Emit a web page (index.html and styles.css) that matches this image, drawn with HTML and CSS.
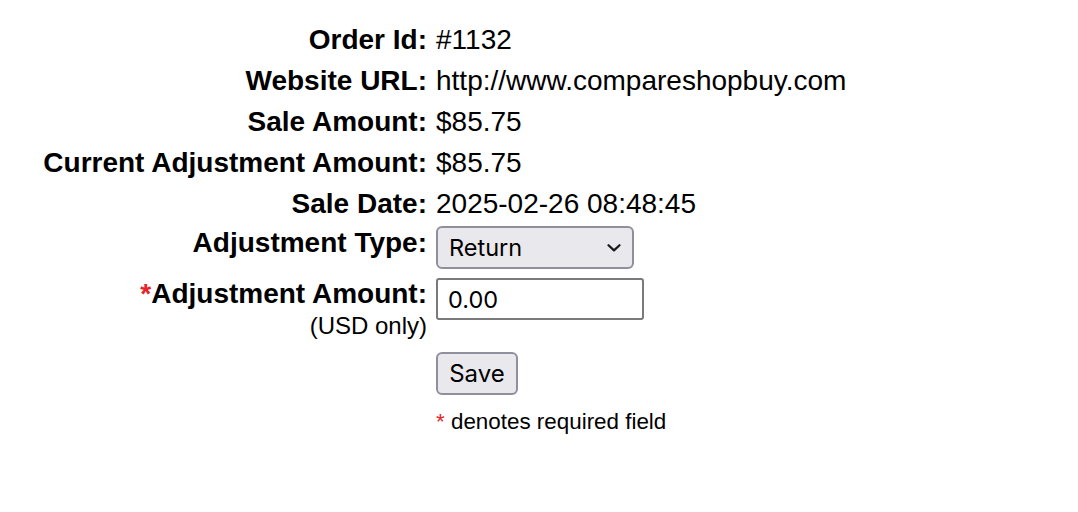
FILE: index.html
```html
<!DOCTYPE html>
<html>
<head>
<meta charset="utf-8">
<link rel="stylesheet" href="styles.css">
</head>
<body>
<form class="form">
  <div class="label">Order Id:</div>
  <div class="value">#1132</div>

  <div class="label">Website URL:</div>
  <div class="value">http://www.compareshopbuy.com</div>

  <div class="label">Sale Amount:</div>
  <div class="value">$85.75</div>

  <div class="label">Current Adjustment Amount:</div>
  <div class="value">$85.75</div>

  <div class="label">Sale Date:</div>
  <div class="value">2025-02-26 08:48:45</div>

  <div class="label label-select">Adjustment Type:</div>
  <div class="value-control">
    <span class="select-wrap">
      <select class="select">
        <option>Return</option>
        <option>Partial Return</option>
      </select>
      <svg class="chevron" width="14" height="8" viewBox="0 0 14 8"><path d="M1.5 1.2 L7 6.4 L12.5 1.2" fill="none" stroke="#1a1a1a" stroke-width="2.2" stroke-linecap="round" stroke-linejoin="round"/></svg>
    </span>
  </div>

  <div class="label label-amount">
    <div class="amount-line"><span class="req">*</span>Adjustment Amount:</div>
    <div class="hint">(USD only)</div>
  </div>
  <div class="value-control amount-cell">
    <input class="input" type="text" value="0.00">
  </div>

  <div class="value-control save-cell">
    <button type="button" class="button">Save</button>
  </div>

  <div class="note"><span class="req-note">*</span> denotes required field</div>
</form>
</body>
</html>
```

FILE: styles.css
```css
html, body {
  margin: 0;
  padding: 0;
  background: #ffffff;
}

body {
  font-family: "Liberation Sans", Arial, sans-serif;
  color: #000000;
}

.form {
  display: grid;
  grid-template-columns: 385px auto;
  column-gap: 9px;
  justify-content: start;
  align-items: start;
  padding: 19px 0 0 42px;
  font-size: 28px;
}

.label {
  grid-column: 1;
  text-align: right;
  font-weight: bold;
  line-height: 41px;
  white-space: nowrap;
}

.value {
  grid-column: 2;
  line-height: 41px;
  white-space: nowrap;
}

.label-select {
  line-height: 37px;
}

.value-control {
  grid-column: 2;
}

.select-wrap {
  position: relative;
  display: inline-block;
  margin-top: 2px;
}

.select {
  appearance: none;
  -webkit-appearance: none;
  display: block;
  box-sizing: border-box;
  width: 198px;
  height: 43px;
  margin: 0;
  padding: 0 0 0 11px;
  border: 2px solid #8f8f9d;
  border-radius: 6px;
  background: #e9e9ed;
  font-family: Inter, "Liberation Sans", sans-serif;
  font-size: 23.5px;
  color: #000000;
}

.chevron {
  position: absolute;
  right: 13px;
  top: 18px;
  pointer-events: none;
}

.label-amount {
  padding-top: 9px;
  line-height: normal;
}

.amount-line {
  line-height: 31px;
}

.req {
  color: #e5242b;
}

.hint {
  font-weight: normal;
  font-size: 24px;
  line-height: 27px;
  padding-top: 3px;
}

.amount-cell {
  padding-top: 9px;
}

.input {
  display: block;
  box-sizing: border-box;
  width: 208px;
  height: 42px;
  margin: 0;
  padding: 0 0 0 10px;
  border: 2px solid #7a7a7a;
  border-radius: 3px;
  background: #ffffff;
  font-family: Inter, "Liberation Sans", sans-serif;
  font-size: 23.5px;
  color: #000000;
}

.save-cell {
  padding-top: 13px;
}

.button {
  display: block;
  box-sizing: border-box;
  width: 82px;
  height: 43px;
  margin: 0;
  padding: 0;
  border: 2px solid #8f8f9d;
  border-radius: 6px;
  background: #e9e9ed;
  font-family: Inter, "Liberation Sans", sans-serif;
  font-size: 24px;
  color: #000000;
}

.note {
  grid-column: 2;
  margin-top: 14px;
  font-size: 22.4px;
  line-height: 25px;
  white-space: nowrap;
}

.req-note {
  color: #e5242b;
}
```
